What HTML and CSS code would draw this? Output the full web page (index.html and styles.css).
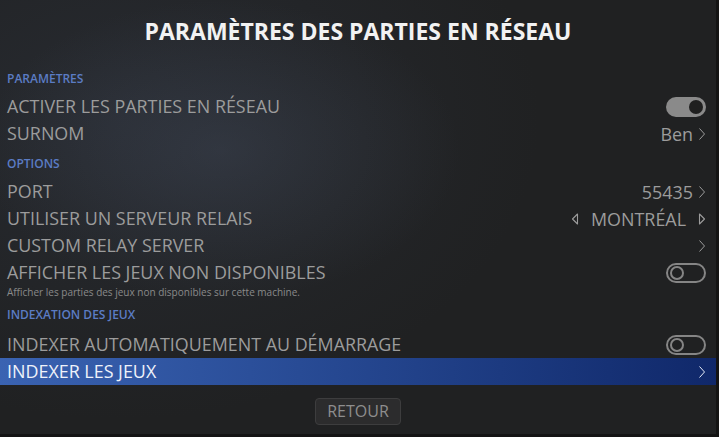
FILE: index.html
```html
<!DOCTYPE html>
<html lang="fr">
<head>
<meta charset="utf-8">
<title>Paramètres des parties en réseau</title>
<link rel="stylesheet" href="styles.css">
</head>
<body>
<div class="frame">
  <div class="screen">
    <h1 class="title">PARAMÈTRES DES PARTIES EN RÉSEAU</h1>

    <div class="section">PARAMÈTRES</div>
    <div class="row">
      <span class="label">ACTIVER LES PARTIES EN RÉSEAU</span>
      <span class="toggle on"><span class="knob"></span></span>
    </div>
    <div class="row">
      <span class="label">SURNOM</span>
      <span class="value">Ben<svg class="chev" viewBox="0 0 8 14" width="8" height="14"><path d="M1.5 1.5 L6.5 7 L1.5 12.5" fill="none" stroke="currentColor" stroke-width="1"/></svg></span>
    </div>

    <div class="section">OPTIONS</div>
    <div class="row">
      <span class="label">PORT</span>
      <span class="value">55435<svg class="chev" viewBox="0 0 8 14" width="8" height="14"><path d="M1.5 1.5 L6.5 7 L1.5 12.5" fill="none" stroke="currentColor" stroke-width="1"/></svg></span>
    </div>
    <div class="row">
      <span class="label">UTILISER UN SERVEUR RELAIS</span>
      <span class="value picker">
        <svg class="tri" viewBox="0 0 8 14" width="8" height="14"><path d="M6.5 2 L1.5 7 L6.5 12 Z" fill="none" stroke="currentColor" stroke-width="1.1" stroke-linejoin="round"/></svg>
        <span class="pick-text">MONTRÉAL</span>
        <svg class="tri" viewBox="0 0 8 14" width="8" height="14"><path d="M1.5 2 L6.5 7 L1.5 12 Z" fill="none" stroke="currentColor" stroke-width="1.1" stroke-linejoin="round"/></svg>
      </span>
    </div>
    <div class="row">
      <span class="label">CUSTOM RELAY SERVER</span>
      <span class="value"><svg class="chev" viewBox="0 0 8 14" width="8" height="14"><path d="M1.5 1.5 L6.5 7 L1.5 12.5" fill="none" stroke="currentColor" stroke-width="1"/></svg></span>
    </div>
    <div class="row tall">
      <div class="stack">
        <span class="label">AFFICHER LES JEUX NON DISPONIBLES</span>
        <span class="sub">Afficher les parties des jeux non disponibles sur cette machine.</span>
      </div>
      <span class="toggle off"><span class="knob"></span></span>
    </div>

    <div class="section sec3">INDEXATION DES JEUX</div>
    <div class="row">
      <span class="label">INDEXER AUTOMATIQUEMENT AU DÉMARRAGE</span>
      <span class="toggle off"><span class="knob"></span></span>
    </div>
    <div class="row selected">
      <span class="label">INDEXER LES JEUX</span>
      <span class="value"><svg class="chev" viewBox="0 0 8 14" width="8" height="14"><path d="M1.5 1.5 L6.5 7 L1.5 12.5" fill="none" stroke="currentColor" stroke-width="1"/></svg></span>
    </div>

    <div class="footer">
      <button class="btn">RETOUR</button>
    </div>
  </div>
</div>
</body>
</html>
```

FILE: styles.css
```css
* { box-sizing: border-box; }
html, body { margin: 0; padding: 0; }
body {
  width: 719px;
  height: 437px;
  overflow: hidden;
  background: #141414;
  font-family: "Open Sans", "Noto Sans", sans-serif;
}
.frame {
  width: 716px;
  height: 434px;
  overflow: hidden;
  background:
    radial-gradient(ellipse 240px 150px at 220px 150px, rgba(74, 84, 104, 0.32), rgba(60, 68, 85, 0) 100%),
    radial-gradient(ellipse 420px 300px at 120px 120px, rgba(48, 54, 66, 0.45), rgba(40, 44, 52, 0) 100%),
    #202122;
}
.screen {
  display: flex;
  flex-direction: column;
}
.title {
  margin: 0;
  height: 62px;
  line-height: 62px;
  text-align: center;
  color: #f2f2f2;
  font-size: 23px;
  font-weight: 700;
}
.section {
  height: 31px;
  padding: 9px 7px 0;
  color: #5b7cc4;
  font-size: 12px;
  font-weight: 600;
  line-height: 16px;
}
.sec3 { height: 30px; padding-top: 6px; }
.row {
  height: 27px;
  display: flex;
  align-items: center;
  justify-content: space-between;
  padding: 0 10px 0 7px;
  color: #9c9c9c;
}
.row.tall {
  height: 42px;
  align-items: flex-start;
}
.stack {
  display: flex;
  flex-direction: column;
}
.stack .label { line-height: 26px; }
.row.tall .toggle { margin-top: 4px; }
.label {
  font-size: 17.9px;
  line-height: 27px;
  white-space: nowrap;
}
.sub {
  font-size: 10px;
  line-height: 14px;
  color: #8a8a8a;
}
.value {
  display: flex;
  align-items: center;
  gap: 5px;
  font-size: 17.9px;
  color: #9c9c9c;
}
.chev { display: block; }
.picker { gap: 0; }
.pick-text { margin: 0 12px; }
.tri { display: block; }
.toggle {
  width: 40px;
  height: 20px;
  border-radius: 10px;
  position: relative;
  flex: none;
}
.toggle.on { background: #8a8a8a; }
.toggle.on .knob {
  position: absolute;
  right: 3px;
  top: 3px;
  width: 14px;
  height: 14px;
  border-radius: 50%;
  background: #1f1f1f;
}
.toggle.off { border: 2px solid #858585; }
.toggle.off .knob {
  position: absolute;
  left: 2px;
  top: 1px;
  width: 14px;
  height: 14px;
  border-radius: 50%;
  border: 2px solid #858585;
}
.row.selected {
  background: linear-gradient(90deg, #3a63b2 0%, #2b4f9a 35%, #1c3a80 70%, #10286a 100%);
  color: #eef2fa;
}
.row.selected .value { color: #e6ecf8; }
.footer {
  display: flex;
  justify-content: center;
  padding-top: 13px;
}
.btn {
  width: 86px;
  height: 27px;
  padding: 0;
  background: #2c2c2d;
  border: 1px solid #3d3d3e;
  border-radius: 4px;
  color: #8e8e8e;
  font-family: "Open Sans", "Noto Sans", sans-serif;
  font-size: 16px;
  line-height: 25px;
}
```
